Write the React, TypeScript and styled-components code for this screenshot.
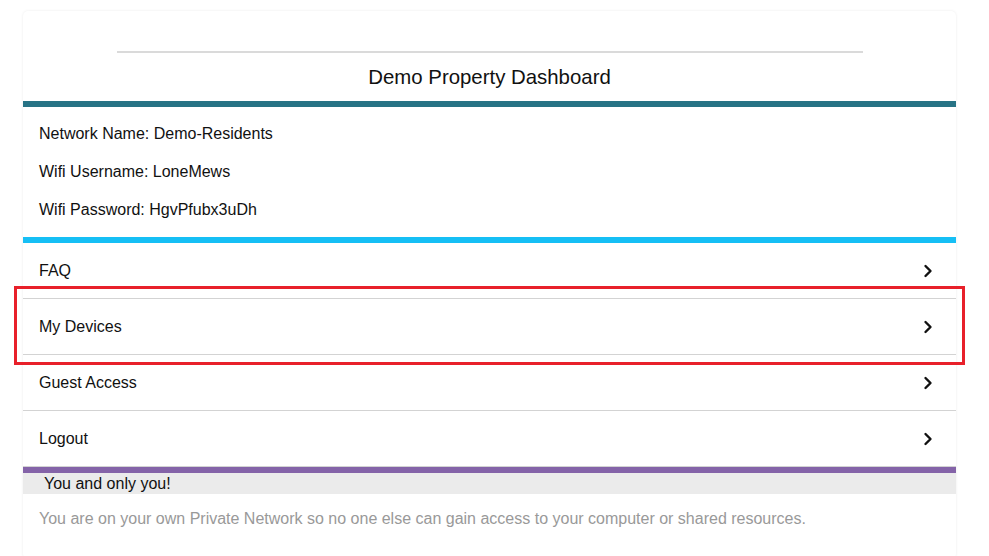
import styled, { createGlobalStyle } from "styled-components";

const GlobalStyle = createGlobalStyle`
  body {
    margin: 0;
    background: #ffffff;
    font-family: "Liberation Sans", Arial, sans-serif;
    color: #111111;
  }
`;

const Page = styled.div`
  padding: 11px 0 0 23px;
  width: 933px;
`;

const Card = styled.div`
  background: #ffffff;
  border-radius: 5px;
  box-shadow: 0 0 3px rgba(0, 0, 0, 0.08);
  padding-top: 40px;
`;

const Rule = styled.hr`
  width: 746px;
  margin: 0 auto;
  border: none;
  border-top: 2px solid #dadada;
`;

const Title = styled.h1`
  margin: 0;
  font-size: 20.4px;
  font-weight: 400;
  line-height: 48px;
  text-align: center;
`;

const Band = styled.div<{ color: string }>`
  height: 6px;
  background: ${({ color }) => color};
`;

const Info = styled.div`
  padding: 8px 16px 8px;
`;

const InfoLine = styled.p`
  margin: 0;
  font-size: 16px;
  line-height: 38px;
`;

const Menu = styled.ul`
  list-style: none;
  margin: 0;
  padding: 0;
`;

const Row = styled.li`
  position: relative;
  display: flex;
  align-items: center;
  justify-content: space-between;
  height: 55px;
  padding: 0 23px 0 16px;
  border-bottom: 1px solid #d3d3d3;
  font-size: 16px;
`;

const Highlight = styled.span`
  position: absolute;
  top: -13px;
  bottom: -11px;
  left: -9px;
  right: -9px;
  border: 3px solid #e8202a;
  pointer-events: none;
`;

const Notice = styled.div`
  background: #ebebeb;
  font-size: 16px;
  line-height: 21px;
  padding-left: 21px;
`;

const Description = styled.p`
  margin: 0;
  padding: 15px 16px 30px;
  font-size: 16px;
  line-height: 20px;
  color: #999999;
`;

function Chevron() {
  return (
    <svg width="10" height="14" viewBox="0 0 10 14">
      <polyline
        points="2.5,2 7.5,7 2.5,12"
        fill="none"
        stroke="#111"
        strokeWidth="2.4"
        strokeLinecap="round"
        strokeLinejoin="round"
      />
    </svg>
  );
}

const links = ["FAQ", "My Devices", "Guest Access", "Logout"];

export default function App() {
  return (
    <>
      <GlobalStyle />
      <Page>
        <Card>
          <Rule />
          <Title>Demo Property Dashboard</Title>
          <Band color="#277385" />
          <Info>
            <InfoLine>Network Name: Demo-Residents</InfoLine>
            <InfoLine>Wifi Username: LoneMews</InfoLine>
            <InfoLine>Wifi Password: HgvPfubx3uDh</InfoLine>
          </Info>
          <Band color="#16bff5" />
          <Menu>
            {links.map((label) => (
              <Row key={label}>
                <span>{label}</span>
                <Chevron />
                {label === "My Devices" && <Highlight />}
              </Row>
            ))}
          </Menu>
          <Band color="#8463a8" />
          <Notice>You and only you!</Notice>
          <Description>
            You are on your own Private Network so no one else can gain access
            to your computer or shared resources.
          </Description>
        </Card>
      </Page>
    </>
  );
}
